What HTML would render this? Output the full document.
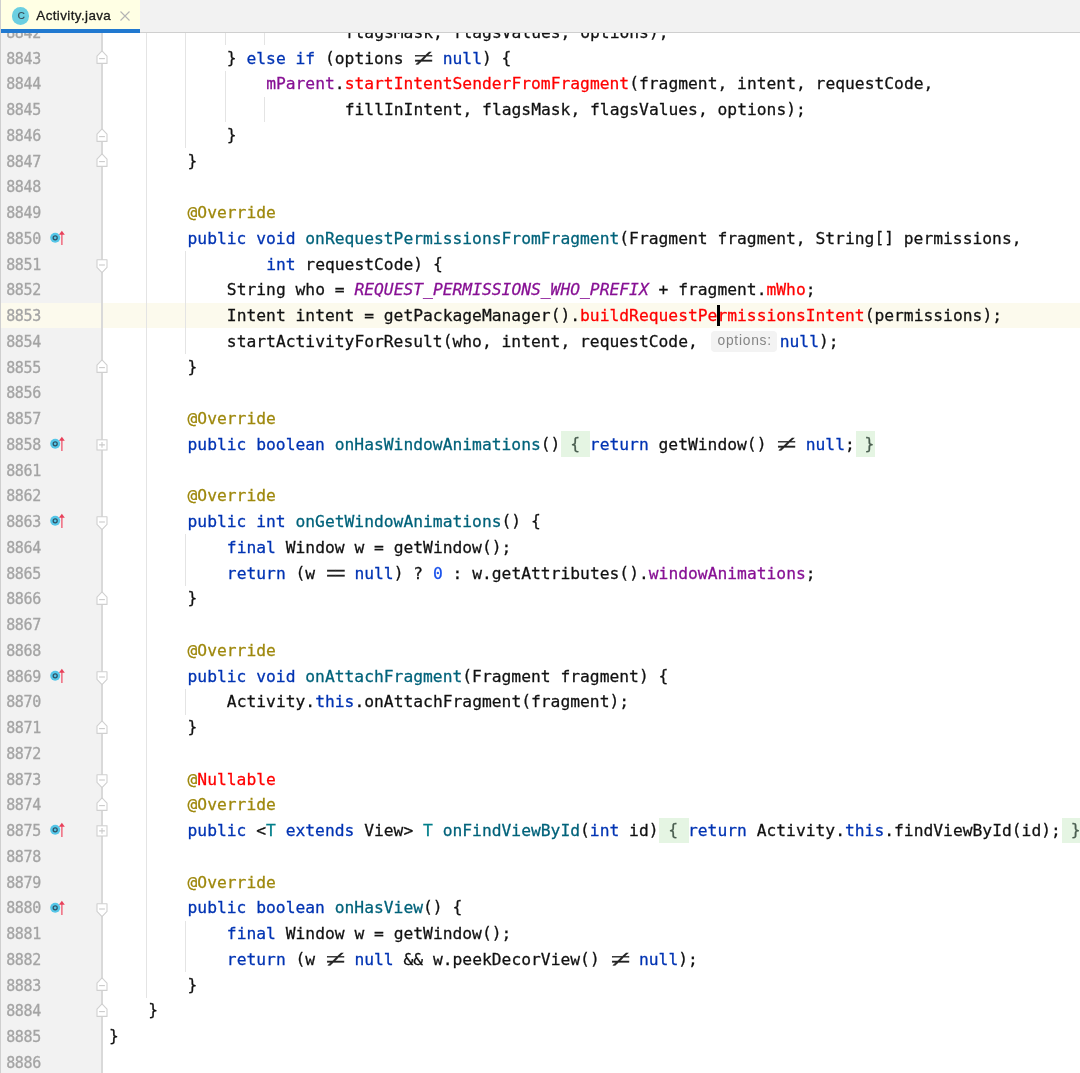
<!DOCTYPE html>
<html lang="en"><head><meta charset="utf-8"><title>Activity.java</title>
<style>
html,body{margin:0;padding:0;}
body{width:1080px;height:1073px;overflow:hidden;background:#fff;position:relative;
 font-family:"DejaVu Sans Mono","Liberation Mono",monospace;}
#root{position:absolute;left:0;top:0;width:1080px;height:1073px;overflow:hidden;background:#fff;will-change:transform;}
#ed{position:absolute;left:0;top:0;width:1080px;height:1073px;overflow:hidden;background:#fff;}
#gut{position:absolute;left:0;top:0;width:101.5px;height:1073px;background:#f2f2f2;}
#edge{position:absolute;left:0;top:0;width:1.3px;height:1073px;background:#cfcfcf;z-index:6;}
#gl{position:absolute;left:101px;top:33px;width:1.6px;height:1040px;background:#d9d9d9;}
.row{position:absolute;left:0;width:1080px;height:25.75px;}
.cur{background:#fcfaed;}
.ln{position:absolute;left:6.2px;font-size:15px;letter-spacing:-0.35px;line-height:26px;color:#a4a4a4;white-space:pre;-webkit-text-stroke:0.3px currentColor;}
.code{position:absolute;font-size:16.317px;line-height:26px;color:#111;white-space:pre;height:26px;-webkit-text-stroke:0.27px currentColor;}
.k{color:#0033b3}.m{color:#00627a}.a{color:#9e880d}.f{color:#871094}
.c{color:#871094;font-style:italic}.r{color:#ff0000}.n{color:#1750eb}.t{color:#007e8a}
.g{color:#4a5e50;}
.code i{font-style:normal;position:relative;top:-1px;}
.gb{position:absolute;top:0;height:25.75px;background:#e5f5e3;}
.lig{display:inline-block;width:19.648px;text-align:center;font-family:"Liberation Serif",serif;-webkit-text-stroke:0.25px currentColor;color:#222;}
.ne{transform:translate(0.9px,-0.1px) scale(2.2,1.42);}
.eq{transform:translate(0.1px,0.5px) scale(1.14,1.5);letter-spacing:-0.1em;}
.hint{display:inline-block;width:72.1px;height:10px;}
.hb{position:absolute;top:3px;width:66px;height:20.3px;border-radius:4px;background:#f3f3f3;color:#858585;
 font-family:"Liberation Sans","DejaVu Sans",sans-serif;font-size:13.8px;letter-spacing:0.75px;text-indent:0.75px;line-height:19.6px;text-align:center;}
.caret{position:absolute;top:2.7px;width:2.6px;height:21px;background:#000;}
.ig{position:absolute;width:1px;background:#e4e4e4;}
#tabs{position:absolute;left:0;top:0;width:1080px;height:32.2px;background:#f2f2f2;border-bottom:1px solid #cfcfcf;z-index:5;box-sizing:content-box;}
#tab{position:absolute;left:1px;top:0;width:139px;height:33px;background:#ffffe4;}
#tab .ul{position:absolute;left:0;bottom:0;width:139px;height:3.8px;background:#2179d0;}
#tab .ic{position:absolute;left:10.9px;top:7px;width:17.6px;height:17.6px;border-radius:50%;background:#6bcfe1;
 font-family:"Liberation Sans","DejaVu Sans",sans-serif;font-size:12.5px;line-height:17px;text-align:center;color:#3c5560;}
#tab .ic span{display:inline-block;transform:scaleX(1.25);}
#tab .nm{position:absolute;left:35.3px;top:0;font-family:"Liberation Sans","DejaVu Sans",sans-serif;font-size:13.4px;letter-spacing:0.4px;line-height:32.5px;color:#1a1a1a;white-space:pre;-webkit-text-stroke:0.3px currentColor;}
#tab svg{position:absolute;left:118.4px;top:9.7px;}
.fm{position:absolute;left:95.8px;}
.ov{position:absolute;left:49px;}
</style></head><body>
<div id="root">
<div id="ed">
<div id="gut"></div>
<div class="row" style="top:19.35px"><span class="ln" style="top:0.65px">8842</span><span class="code" style="left:344.73px;top:0.65px">flagsMask, flagsValues, options<i>)</i>;</span></div>
<div class="row" style="top:45.10px"><span class="ln" style="top:0.90px">8843</span><span class="code" style="left:226.84px;top:0.90px"><i>}</i> <span class="k">else if</span> <i>(</i>options <span class="lig ne">≠</span> <span class="k">null</span><i>)</i> <i>{</i></span></div>
<div class="row" style="top:70.85px"><span class="ln" style="top:0.15px">8844</span><span class="code" style="left:266.13px;top:0.15px"><span class="f">mParent</span>.<span class="r">startIntentSenderFromFragment</span><i>(</i>fragment, intent, requestCode,</span></div>
<div class="row" style="top:96.60px"><span class="ln" style="top:0.40px">8845</span><span class="code" style="left:344.73px;top:0.40px">fillInIntent, flagsMask, flagsValues, options<i>)</i>;</span></div>
<div class="row" style="top:122.35px"><span class="ln" style="top:0.65px">8846</span><span class="code" style="left:226.84px;top:0.65px"><i>}</i></span></div>
<div class="row" style="top:148.10px"><span class="ln" style="top:0.90px">8847</span><span class="code" style="left:187.54px;top:0.90px"><i>}</i></span></div>
<div class="row" style="top:173.85px"><span class="ln" style="top:0.15px">8848</span></div>
<div class="row" style="top:199.60px"><span class="ln" style="top:0.40px">8849</span><span class="code" style="left:187.54px;top:0.40px"><span class="a">@Override</span></span></div>
<div class="row" style="top:225.35px"><span class="ln" style="top:0.65px">8850</span><span class="code" style="left:187.54px;top:0.65px"><span class="k">public void</span> <span class="m">onRequestPermissionsFromFragment</span><i>(</i>Fragment fragment, String<i>[]</i> permissions,</span></div>
<div class="row" style="top:251.10px"><span class="ln" style="top:0.90px">8851</span><span class="code" style="left:266.13px;top:0.90px"><span class="k">int</span> requestCode<i>)</i> <i>{</i></span></div>
<div class="row" style="top:276.85px"><span class="ln" style="top:0.15px">8852</span><span class="code" style="left:226.84px;top:0.15px">String who = <span class="c">REQUEST_PERMISSIONS_WHO_PREFIX</span> + fragment.<span class="r">mWho</span>;</span></div>
<div class="row cur" style="top:302.60px"><span class="ln" style="top:0.40px">8853</span><span class="code" style="left:226.84px;top:0.40px">Intent intent = getPackageManager<i>()</i>.<span class="r">buildRequestPe</span><span class="r">rmissionsIntent</span><i>(</i>permissions<i>)</i>;</span><span class="caret" style="left:717.14px"></span></div>
<div class="row" style="top:328.35px"><span class="ln" style="top:0.65px">8854</span><span class="code" style="left:226.84px;top:0.65px">startActivityForResult<i>(</i>who, intent, requestCode, <span class="hint"></span><span class="k">null</span><i>)</i>;</span><span class="hb" style="left:711.31px">options:</span></div>
<div class="row" style="top:354.10px"><span class="ln" style="top:0.90px">8855</span><span class="code" style="left:187.54px;top:0.90px"><i>}</i></span></div>
<div class="row" style="top:379.85px"><span class="ln" style="top:0.15px">8856</span></div>
<div class="row" style="top:405.60px"><span class="ln" style="top:0.40px">8857</span><span class="code" style="left:187.54px;top:0.40px"><span class="a">@Override</span></span></div>
<div class="row" style="top:431.35px"><span class="gb" style="left:560.85px;width:29.47px"></span><span class="gb" style="left:855.57px;width:19.65px"></span><span class="ln" style="top:0.65px">8858</span><span class="code" style="left:187.54px;top:0.65px"><span class="k">public boolean</span> <span class="m">onHasWindowAnimations</span><i>()</i><span class="g"> <i>{</i> </span><span class="k">return</span> getWindow<i>()</i> <span class="lig ne">≠</span> <span class="k">null</span>;<span class="g"> <i>}</i></span></span></div>
<div class="row" style="top:457.10px"><span class="ln" style="top:0.90px">8861</span></div>
<div class="row" style="top:482.85px"><span class="ln" style="top:0.15px">8862</span><span class="code" style="left:187.54px;top:0.15px"><span class="a">@Override</span></span></div>
<div class="row" style="top:508.60px"><span class="ln" style="top:0.40px">8863</span><span class="code" style="left:187.54px;top:0.40px"><span class="k">public int</span> <span class="m">onGetWindowAnimations</span><i>()</i> <i>{</i></span></div>
<div class="row" style="top:534.35px"><span class="ln" style="top:0.65px">8864</span><span class="code" style="left:226.84px;top:0.65px"><span class="k">final</span> Window w = getWindow<i>()</i>;</span></div>
<div class="row" style="top:560.10px"><span class="ln" style="top:0.90px">8865</span><span class="code" style="left:226.84px;top:0.90px"><span class="k">return</span> <i>(</i>w <span class="lig eq">==</span> <span class="k">null</span><i>)</i> ? <span class="n">0</span> : w.getAttributes<i>()</i>.<span class="f">windowAnimations</span>;</span></div>
<div class="row" style="top:585.85px"><span class="ln" style="top:0.15px">8866</span><span class="code" style="left:187.54px;top:0.15px"><i>}</i></span></div>
<div class="row" style="top:611.60px"><span class="ln" style="top:0.40px">8867</span></div>
<div class="row" style="top:637.35px"><span class="ln" style="top:0.65px">8868</span><span class="code" style="left:187.54px;top:0.65px"><span class="a">@Override</span></span></div>
<div class="row" style="top:663.10px"><span class="ln" style="top:0.90px">8869</span><span class="code" style="left:187.54px;top:0.90px"><span class="k">public void</span> <span class="m">onAttachFragment</span><i>(</i>Fragment fragment<i>)</i> <i>{</i></span></div>
<div class="row" style="top:688.85px"><span class="ln" style="top:0.15px">8870</span><span class="code" style="left:226.84px;top:0.15px">Activity.<span class="k">this</span>.onAttachFragment<i>(</i>fragment<i>)</i>;</span></div>
<div class="row" style="top:714.60px"><span class="ln" style="top:0.40px">8871</span><span class="code" style="left:187.54px;top:0.40px"><i>}</i></span></div>
<div class="row" style="top:740.35px"><span class="ln" style="top:0.65px">8872</span></div>
<div class="row" style="top:766.10px"><span class="ln" style="top:0.90px">8873</span><span class="code" style="left:187.54px;top:0.90px"><span class="a">@</span><span class="r">Nullable</span></span></div>
<div class="row" style="top:791.85px"><span class="ln" style="top:0.15px">8874</span><span class="code" style="left:187.54px;top:0.15px"><span class="a">@Override</span></span></div>
<div class="row" style="top:817.60px"><span class="gb" style="left:659.09px;width:29.47px"></span><span class="gb" style="left:1061.88px;width:19.65px"></span><span class="ln" style="top:0.40px">8875</span><span class="code" style="left:187.54px;top:0.40px"><span class="k">public</span> &lt;<span class="t">T</span> <span class="k">extends</span> View&gt; <span class="t">T</span> <span class="m">onFindViewById</span><i>(</i><span class="k">int</span> id<i>)</i><span class="g"> <i>{</i> </span><span class="k">return</span> Activity.<span class="k">this</span>.findViewById<i>(</i>id<i>)</i>;<span class="g"> <i>}</i></span></span></div>
<div class="row" style="top:843.35px"><span class="ln" style="top:0.65px">8878</span></div>
<div class="row" style="top:869.10px"><span class="ln" style="top:0.90px">8879</span><span class="code" style="left:187.54px;top:0.90px"><span class="a">@Override</span></span></div>
<div class="row" style="top:894.85px"><span class="ln" style="top:0.15px">8880</span><span class="code" style="left:187.54px;top:0.15px"><span class="k">public boolean</span> <span class="m">onHasView</span><i>()</i> <i>{</i></span></div>
<div class="row" style="top:920.60px"><span class="ln" style="top:0.40px">8881</span><span class="code" style="left:226.84px;top:0.40px"><span class="k">final</span> Window w = getWindow<i>()</i>;</span></div>
<div class="row" style="top:946.35px"><span class="ln" style="top:0.65px">8882</span><span class="code" style="left:226.84px;top:0.65px"><span class="k">return</span> <i>(</i>w <span class="lig ne">≠</span> <span class="k">null</span> &amp;&amp; w.peekDecorView<i>()</i> <span class="lig ne">≠</span> <span class="k">null</span><i>)</i>;</span></div>
<div class="row" style="top:972.10px"><span class="ln" style="top:0.90px">8883</span><span class="code" style="left:187.54px;top:0.90px"><i>}</i></span></div>
<div class="row" style="top:997.85px"><span class="ln" style="top:0.15px">8884</span><span class="code" style="left:148.25px;top:0.15px"><i>}</i></span></div>
<div class="row" style="top:1023.60px"><span class="ln" style="top:0.40px">8885</span><span class="code" style="left:108.95px;top:0.40px"><i>}</i></span></div>
<div class="row" style="top:1049.35px"><span class="ln" style="top:0.65px">8886</span></div>
<div id="gl"></div>
<div class="ig" style="left:145.9px;top:19.35px;height:978.50px"></div>
<div class="ig" style="left:185.3px;top:19.35px;height:128.75px"></div>
<div class="ig" style="left:185.3px;top:251.10px;height:103.00px"></div>
<div class="ig" style="left:185.3px;top:534.35px;height:51.50px"></div>
<div class="ig" style="left:185.3px;top:688.85px;height:25.75px"></div>
<div class="ig" style="left:185.3px;top:920.60px;height:51.50px"></div>
<div class="ig" style="left:224.8px;top:19.35px;height:25.75px"></div>
<div class="ig" style="left:224.8px;top:70.85px;height:51.50px"></div>
<div class="ig" style="left:264.2px;top:19.35px;height:25.75px"></div>
<div class="ig" style="left:264.2px;top:96.60px;height:25.75px"></div>
<svg class="fm" style="top:50.38px" width="12" height="15" viewBox="0 0 12 15"><path d="M1 6.2 L6 0.8 L11 6.2 V13.4 H1 Z" fill="#fff" stroke="#d0d0d0" stroke-width="1.1" stroke-linejoin="round"/><path d="M3.1 8.6 H8.9" stroke="#cbcbcb" stroke-width="1.1"/></svg>
<svg class="fm" style="top:127.62px" width="12" height="15" viewBox="0 0 12 15"><path d="M1 6.2 L6 0.8 L11 6.2 V13.4 H1 Z" fill="#fff" stroke="#d0d0d0" stroke-width="1.1" stroke-linejoin="round"/><path d="M3.1 8.6 H8.9" stroke="#cbcbcb" stroke-width="1.1"/></svg>
<svg class="fm" style="top:153.38px" width="12" height="15" viewBox="0 0 12 15"><path d="M1 6.2 L6 0.8 L11 6.2 V13.4 H1 Z" fill="#fff" stroke="#d0d0d0" stroke-width="1.1" stroke-linejoin="round"/><path d="M3.1 8.6 H8.9" stroke="#cbcbcb" stroke-width="1.1"/></svg>
<svg class="fm" style="top:359.38px" width="12" height="15" viewBox="0 0 12 15"><path d="M1 6.2 L6 0.8 L11 6.2 V13.4 H1 Z" fill="#fff" stroke="#d0d0d0" stroke-width="1.1" stroke-linejoin="round"/><path d="M3.1 8.6 H8.9" stroke="#cbcbcb" stroke-width="1.1"/></svg>
<svg class="fm" style="top:591.12px" width="12" height="15" viewBox="0 0 12 15"><path d="M1 6.2 L6 0.8 L11 6.2 V13.4 H1 Z" fill="#fff" stroke="#d0d0d0" stroke-width="1.1" stroke-linejoin="round"/><path d="M3.1 8.6 H8.9" stroke="#cbcbcb" stroke-width="1.1"/></svg>
<svg class="fm" style="top:719.88px" width="12" height="15" viewBox="0 0 12 15"><path d="M1 6.2 L6 0.8 L11 6.2 V13.4 H1 Z" fill="#fff" stroke="#d0d0d0" stroke-width="1.1" stroke-linejoin="round"/><path d="M3.1 8.6 H8.9" stroke="#cbcbcb" stroke-width="1.1"/></svg>
<svg class="fm" style="top:797.12px" width="12" height="15" viewBox="0 0 12 15"><path d="M1 6.2 L6 0.8 L11 6.2 V13.4 H1 Z" fill="#fff" stroke="#d0d0d0" stroke-width="1.1" stroke-linejoin="round"/><path d="M3.1 8.6 H8.9" stroke="#cbcbcb" stroke-width="1.1"/></svg>
<svg class="fm" style="top:977.38px" width="12" height="15" viewBox="0 0 12 15"><path d="M1 6.2 L6 0.8 L11 6.2 V13.4 H1 Z" fill="#fff" stroke="#d0d0d0" stroke-width="1.1" stroke-linejoin="round"/><path d="M3.1 8.6 H8.9" stroke="#cbcbcb" stroke-width="1.1"/></svg>
<svg class="fm" style="top:1003.12px" width="12" height="15" viewBox="0 0 12 15"><path d="M1 6.2 L6 0.8 L11 6.2 V13.4 H1 Z" fill="#fff" stroke="#d0d0d0" stroke-width="1.1" stroke-linejoin="round"/><path d="M3.1 8.6 H8.9" stroke="#cbcbcb" stroke-width="1.1"/></svg>
<svg class="fm" style="top:258.78px" width="12" height="15" viewBox="0 0 12 15"><path d="M1 0.8 H11 V8.4 L6 13.6 L1 8.4 Z" fill="#fff" stroke="#d0d0d0" stroke-width="1.1" stroke-linejoin="round"/><path d="M3.1 6 H8.9" stroke="#cbcbcb" stroke-width="1.1"/></svg>
<svg class="fm" style="top:516.27px" width="12" height="15" viewBox="0 0 12 15"><path d="M1 0.8 H11 V8.4 L6 13.6 L1 8.4 Z" fill="#fff" stroke="#d0d0d0" stroke-width="1.1" stroke-linejoin="round"/><path d="M3.1 6 H8.9" stroke="#cbcbcb" stroke-width="1.1"/></svg>
<svg class="fm" style="top:670.77px" width="12" height="15" viewBox="0 0 12 15"><path d="M1 0.8 H11 V8.4 L6 13.6 L1 8.4 Z" fill="#fff" stroke="#d0d0d0" stroke-width="1.1" stroke-linejoin="round"/><path d="M3.1 6 H8.9" stroke="#cbcbcb" stroke-width="1.1"/></svg>
<svg class="fm" style="top:773.77px" width="12" height="15" viewBox="0 0 12 15"><path d="M1 0.8 H11 V8.4 L6 13.6 L1 8.4 Z" fill="#fff" stroke="#d0d0d0" stroke-width="1.1" stroke-linejoin="round"/><path d="M3.1 6 H8.9" stroke="#cbcbcb" stroke-width="1.1"/></svg>
<svg class="fm" style="top:902.52px" width="12" height="15" viewBox="0 0 12 15"><path d="M1 0.8 H11 V8.4 L6 13.6 L1 8.4 Z" fill="#fff" stroke="#d0d0d0" stroke-width="1.1" stroke-linejoin="round"/><path d="M3.1 6 H8.9" stroke="#cbcbcb" stroke-width="1.1"/></svg>
<svg class="fm" style="top:439.23px" width="12" height="12" viewBox="0 0 12 12"><rect x="1" y="0.8" width="10" height="10.2" fill="#fff" stroke="#d0d0d0" stroke-width="1.1"/><path d="M3.1 5.9 H8.9 M6 3 V8.8" stroke="#cbcbcb" stroke-width="1.1"/></svg>
<svg class="fm" style="top:825.48px" width="12" height="12" viewBox="0 0 12 12"><rect x="1" y="0.8" width="10" height="10.2" fill="#fff" stroke="#d0d0d0" stroke-width="1.1"/><path d="M3.1 5.9 H8.9 M6 3 V8.8" stroke="#cbcbcb" stroke-width="1.1"/></svg>
<svg class="ov" style="top:230.22px" width="18" height="16" viewBox="0 0 18 16"><circle cx="6.2" cy="7.8" r="5" fill="#55c6e8"/><circle cx="6.2" cy="7.8" r="2" fill="none" stroke="#2f5568" stroke-width="1.3"/><path d="M12.85 15 V3.5" stroke="#f07a8c" stroke-width="1.7"/><path d="M9.9 4.7 L12.85 0.7 L15.8 4.7 Z" fill="#e8405a"/></svg>
<svg class="ov" style="top:436.23px" width="18" height="16" viewBox="0 0 18 16"><circle cx="6.2" cy="7.8" r="5" fill="#55c6e8"/><circle cx="6.2" cy="7.8" r="2" fill="none" stroke="#2f5568" stroke-width="1.3"/><path d="M12.85 15 V3.5" stroke="#f07a8c" stroke-width="1.7"/><path d="M9.9 4.7 L12.85 0.7 L15.8 4.7 Z" fill="#e8405a"/></svg>
<svg class="ov" style="top:513.48px" width="18" height="16" viewBox="0 0 18 16"><circle cx="6.2" cy="7.8" r="5" fill="#55c6e8"/><circle cx="6.2" cy="7.8" r="2" fill="none" stroke="#2f5568" stroke-width="1.3"/><path d="M12.85 15 V3.5" stroke="#f07a8c" stroke-width="1.7"/><path d="M9.9 4.7 L12.85 0.7 L15.8 4.7 Z" fill="#e8405a"/></svg>
<svg class="ov" style="top:667.98px" width="18" height="16" viewBox="0 0 18 16"><circle cx="6.2" cy="7.8" r="5" fill="#55c6e8"/><circle cx="6.2" cy="7.8" r="2" fill="none" stroke="#2f5568" stroke-width="1.3"/><path d="M12.85 15 V3.5" stroke="#f07a8c" stroke-width="1.7"/><path d="M9.9 4.7 L12.85 0.7 L15.8 4.7 Z" fill="#e8405a"/></svg>
<svg class="ov" style="top:822.48px" width="18" height="16" viewBox="0 0 18 16"><circle cx="6.2" cy="7.8" r="5" fill="#55c6e8"/><circle cx="6.2" cy="7.8" r="2" fill="none" stroke="#2f5568" stroke-width="1.3"/><path d="M12.85 15 V3.5" stroke="#f07a8c" stroke-width="1.7"/><path d="M9.9 4.7 L12.85 0.7 L15.8 4.7 Z" fill="#e8405a"/></svg>
<svg class="ov" style="top:899.73px" width="18" height="16" viewBox="0 0 18 16"><circle cx="6.2" cy="7.8" r="5" fill="#55c6e8"/><circle cx="6.2" cy="7.8" r="2" fill="none" stroke="#2f5568" stroke-width="1.3"/><path d="M12.85 15 V3.5" stroke="#f07a8c" stroke-width="1.7"/><path d="M9.9 4.7 L12.85 0.7 L15.8 4.7 Z" fill="#e8405a"/></svg>
</div>
<div id="tabs"><div id="tab"><span class="ic"><span>c</span></span><span class="nm">Activity.java</span>
<svg width="12" height="12" viewBox="0 0 12 12"><path d="M1.5 1.5 L10.5 10.5 M10.5 1.5 L1.5 10.5" stroke="#b4b4b4" stroke-width="1.1" fill="none"/></svg>
<div class="ul"></div></div></div>
<div id="edge"></div>
</div>
</body></html>
